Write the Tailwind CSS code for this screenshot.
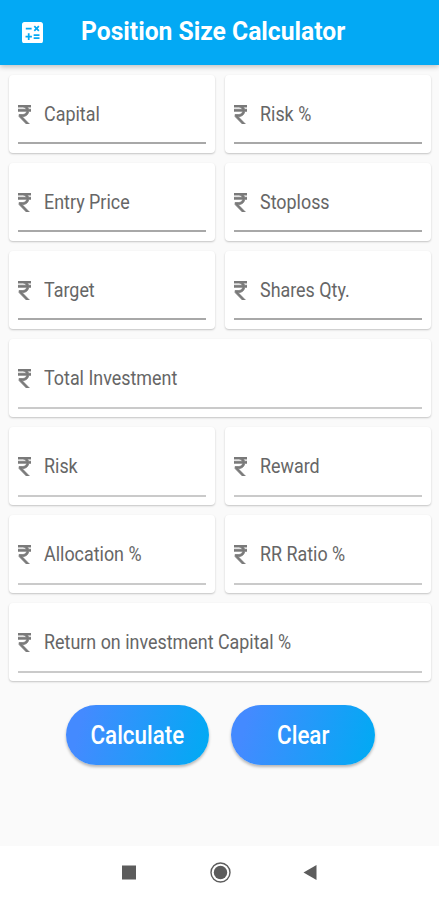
<!DOCTYPE html>
<html lang="en">
<head>
<meta charset="utf-8">
<title>Position Size Calculator</title>
<script src="https://cdn.jsdelivr.net/npm/@tailwindcss/browser@4"></script>
</head>
<body class="w-[439px] h-[900px] overflow-hidden bg-[#fafafa] font-[Roboto,sans-serif] flex flex-col">
<svg class="hidden">
  <symbol id="rupee" viewBox="6 3 12 18" preserveAspectRatio="none"><path d="M13.66 7c-.56-1.18-1.76-2-3.16-2H6V3h12v2h-3.26c.48.58.84 1.26 1.05 2H18v2h-2.02c-.25 2.8-2.61 5-5.48 5h-.73l6.73 7h-2.77L7 14v-2h3.5c1.76 0 3.22-1.3 3.46-3H6V7h7.66z"/></symbol>
</svg>
<header class="h-[65px] shrink-0 bg-[#03a9f4] flex items-center pl-[21.5px] shadow-[0_2px_5px_rgba(0,0,0,0.22)]">
  <svg class="w-[21px] h-[21.5px]" viewBox="3 3 18 18" preserveAspectRatio="none" fill="#fff"><path fill-rule="evenodd" d="M19 3H5c-1.1 0-2 .9-2 2v14c0 1.100.9 2 2 2h14c1.100 0 2-.9 2-2V5c0-1.100-.9-2-2-2zm-5.970 4.060L14.090 6l1.410 1.410L16.910 6l1.060 1.060-1.410 1.410 1.410 1.410-1.060 1.060-1.410-1.400-1.410 1.410-1.060-1.060 1.410-1.410-1.410-1.420zM6.250 7.720h5v1.500h-5v-1.500zM11.500 16h-2v2H8v-2H6v-1.500h2v-2h1.500v2h2V16zm6.500 1.250h-5v-1.500h5v1.500zm0-2.500h-5v-1.500h5v1.500z"/></svg>
  <h1 class="ml-[38.500px] -mt-[3px] text-[26px] leading-[30px] font-bold text-white whitespace-nowrap origin-left scale-x-[0.948]">Position Size Calculator</h1>
</header>
<main id="fields" class="grid grid-cols-2 gap-x-[10px] gap-y-[10px] pt-[10px] pl-[9px] pr-[8px]"></main>
<div class="flex gap-[22px] pl-[65.5px] mt-[24px]">
  <button class="w-[143.500px] h-[60px] rounded-full bg-[linear-gradient(105deg,#448aff_12%,#03a9f4_95%)] text-white text-[25px] font-medium flex items-center justify-center shadow-[0_2px_3px_rgba(0,0,0,0.28)]"><span class="mt-[2px] scale-x-[0.895]">Calculate</span></button>
  <button class="w-[143.500px] h-[60px] rounded-full bg-[linear-gradient(105deg,#448aff_12%,#03a9f4_95%)] text-white text-[25px] font-medium flex items-center justify-center shadow-[0_2px_3px_rgba(0,0,0,0.28)]"><span class="mt-[2px] scale-x-[0.895]">Clear</span></button>
</div>
<nav class="mt-auto h-[54px] shrink-0 bg-white">
  <svg class="block" width="439" height="54" fill="#5c5c5c"><rect x="122" y="19.500" width="14" height="14"/><circle cx="220.500" cy="26.500" r="9.500" fill="none" stroke="#5c5c5c" stroke-width="1.400"/><circle cx="220.500" cy="26.500" r="6.700"/><path d="M303.500 26.500L316.500 19v15z"/></svg>
</nav>
<script>
const fields = [['Capital'], ['Risk %'], ['Entry Price'], ['Stoploss'], ['Target'], ['Shares Qty.'], ['Total Investment', 1], ['Risk'], ['Reward'], ['Allocation %'], ['RR Ratio %'], ['Return on investment Capital %', 1]];
document.getElementById('fields').innerHTML = fields.map(([label, wide], i) => `
  <label class="${wide ? 'col-span-2' : ''} h-[78px] rounded-[4px] bg-white px-[9px] pt-[25px] shadow-[0_1px_2px_rgba(0,0,0,0.22)]">
    <span class="flex items-center h-[28px]">
      <svg class="w-[13px] h-[19px] text-[#7a7a7a] overflow-visible" fill="currentColor" stroke="currentColor" stroke-width="0.700"><use href="#rupee"/></svg>
      <span class="ml-[12.500px] text-[20px] leading-[28px] text-[#666] whitespace-nowrap origin-left scale-x-[0.895]">${label}</span>
    </span>
    <span class="block ${i < 6 ? 'mt-[14px] h-[2px] bg-[#a8a8a8]' : 'mt-[15px] h-[2px] bg-[#cacaca]'}"></span>
  </label>`).join('');
</script>
</body>
</html>
